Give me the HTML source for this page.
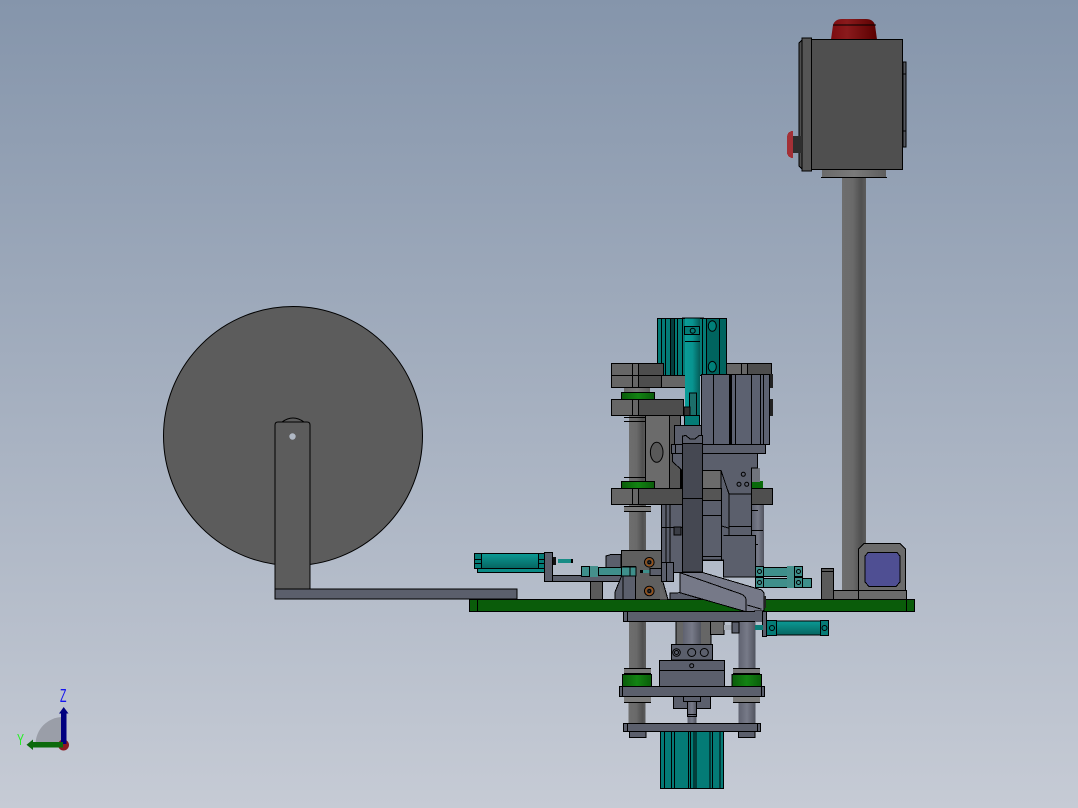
<!DOCTYPE html>
<html><head><meta charset="utf-8"><style>
html,body{margin:0;padding:0;width:1078px;height:808px;overflow:hidden}
svg{display:block}
rect,path,circle,ellipse,polygon{stroke:#000;stroke-width:1}
.n{stroke:none}
.l{fill:none;stroke:#000;stroke-width:1}
.b{fill:#5b5f6c}
.d{fill:#4d4d4d}
.g{fill:#666}
.t{fill:#047b76}
.gr{fill:#0a5c0a}
</style></head><body>
<svg width="1078" height="808" viewBox="0 0 1078 808" xmlns="http://www.w3.org/2000/svg" shape-rendering="crispEdges">
<defs>
<linearGradient id="bg" x1="0" y1="0" x2="0" y2="1"><stop offset="0" stop-color="#8595ab"/><stop offset="1" stop-color="#c6cbd5"/></linearGradient>
<linearGradient id="cy" x1="0" y1="0" x2="1" y2="0"><stop offset="0" stop-color="#6e6e6e"/><stop offset=".45" stop-color="#6a6a6a"/><stop offset=".8" stop-color="#505050"/><stop offset="1" stop-color="#5c5c5c"/></linearGradient>
<linearGradient id="cb" x1="0" y1="0" x2="1" y2="0"><stop offset="0" stop-color="#5f6270"/><stop offset=".5" stop-color="#777a88"/><stop offset="1" stop-color="#50535e"/></linearGradient>
<linearGradient id="tr" x1="0" y1="0" x2="1" y2="0"><stop offset="0" stop-color="#0a9c97"/><stop offset=".5" stop-color="#089490"/><stop offset="1" stop-color="#055c58"/></linearGradient>
<linearGradient id="th" x1="0" y1="0" x2="0" y2="1"><stop offset="0" stop-color="#0b9a95"/><stop offset="1" stop-color="#066560"/></linearGradient>
<linearGradient id="grn" x1="0" y1="0" x2="1" y2="0"><stop offset="0" stop-color="#0a5c0a"/><stop offset=".5" stop-color="#138313"/><stop offset="1" stop-color="#0a5c0a"/></linearGradient>
<linearGradient id="red" x1="0" y1="0" x2="1" y2="0"><stop offset="0" stop-color="#7d0c10"/><stop offset=".35" stop-color="#8a1a1c"/><stop offset="1" stop-color="#5a0000"/></linearGradient>
<linearGradient id="col" x1="0" y1="0" x2="1" y2="0"><stop offset="0" stop-color="#6a6a6a"/><stop offset=".5" stop-color="#7a7a7a"/><stop offset="1" stop-color="#5e5e5e"/></linearGradient>
</defs>
<rect class="n" x="0" y="0" width="1078" height="808" fill="url(#bg)"/>

<!-- spool -->
<g shape-rendering="auto">
<circle cx="293" cy="436" r="129.5" fill="#5c5c5c"/>
<path d="M282 422Q293 414 304 422" fill="#5c5c5c"/>
<path d="M275 590V425Q275 422 278 422H307Q310 422 310 425V590Z" fill="#5c5c5c"/>
<circle class="n" cx="292.500" cy="436.500" r="3.200" fill="#b0b8c4"/>
</g>
<rect class="b" x="275" y="589" width="242" height="10"/>

<!-- pole and box -->
<rect x="842" y="177" width="24" height="414" fill="url(#cy)" class="n"/>
<path class="n" fill="url(#red)" d="M831 39.500L833 25Q835 19 842 19H866Q873 19 875 25L877 39.500Z" shape-rendering="auto"/>
<path class="l" d="M833 25H876"/>
<path d="M802 40L799 43V166L802 169Z" class="d"/>
<rect x="802" y="38" width="9.500" height="133" fill="#555"/>
<rect x="811.500" y="39.500" width="91" height="130" fill="#4f4f4f"/>
<rect class="n" x="822" y="170" width="64" height="7" fill="url(#col)"/>
<path class="l" d="M821 177.500H887"/>
<rect x="903" y="62" width="3" height="85" fill="#55585f"/>
<path class="l" d="M903 74H906M903 131H906"/>
<path class="n" fill="#a33036" d="M787 136Q788 131 793 131V158Q788 158 787 153Z"/>
<rect class="n" x="793" y="136" width="9" height="17" fill="#2e2e2e"/>

<!-- right box on plate -->
<rect x="821.500" y="568.500" width="12" height="31" fill="#5a5a5a"/>
<path class="l" d="M821 571.500H834"/>
<rect x="834" y="591" width="25" height="8" fill="#6b6b6b" class="n"/>
<path class="l" d="M834 590.500H859"/>
<path fill="#6b6b6b" d="M858.500 590.500V549L864 543.500H900L905.500 549V590.500Z"/>
<path fill="#4f4f93" d="M865 556L868 552.500H897L900 556V582L896 586.500H869L865 582Z"/>
<rect x="858.500" y="590.500" width="48" height="9" fill="#6b6b6b"/>

<!-- upper teal -->
<rect class="t" x="657.500" y="318.500" width="69" height="57"/>
<rect class="n" x="707" y="319" width="19" height="56" fill="#00645f"/>
<rect class="n" x="671" y="319" width="3" height="56" fill="#04403e"/>
<path class="l" d="M661.500 319V375M665.500 319V375M670.500 319V375M674.500 319V375M677.500 319V375M682.500 319V375M702.500 319V375M706.500 319V375M719.500 319V375"/>
<g shape-rendering="auto"><ellipse cx="712.300" cy="326" rx="4" ry="5.300" fill="#00807a"/><ellipse cx="712.300" cy="366.700" rx="4" ry="5.300" fill="#00807a"/></g>

<!-- upper plates -->
<rect class="g" x="611.500" y="363.500" width="52" height="12"/>
<rect class="d" x="638.500" y="363.500" width="25" height="12"/>
<rect class="g" x="611.500" y="375.500" width="74" height="12"/>
<rect class="d" x="638.500" y="375.500" width="23" height="12"/>
<path class="l" d="M632.500 363V387M638.500 363V387"/>
<rect class="g" x="726.500" y="363.500" width="45" height="12"/>
<rect class="d" x="747.500" y="363.500" width="24" height="12"/>
<path class="l" d="M741.500 363V375M747.500 363V375"/>
<rect class="n" x="770" y="374" width="3" height="14" fill="#222"/>
<rect class="n" x="624" y="388" width="26" height="5" fill="url(#col)"/>
<rect x="621.500" y="392.500" width="33" height="7" fill="url(#grn)"/>
<rect class="g" x="611.500" y="399.500" width="72" height="16"/>
<rect class="d" x="638.500" y="399.500" width="45" height="16"/>
<path class="l" d="M632.500 399V415M638.500 399V415"/>
<rect class="n" x="770" y="399" width="3" height="17" fill="#222"/>

<!-- pillar + block upper-left -->
<rect class="n" x="629" y="416" width="17" height="66" fill="url(#cy)"/>
<path class="l" d="M624 417.500H651M624 421.500H651M624 477.500H651"/>
<rect x="645.500" y="415.500" width="35" height="73" fill="#6b6b6b"/>
<rect x="669.500" y="415.500" width="11" height="73" fill="#555"/>
<g shape-rendering="auto"><ellipse cx="656.700" cy="452.300" rx="6.300" ry="10" fill="#595959"/></g>
<rect x="621.500" y="481.500" width="33" height="7" fill="url(#grn)"/>
<rect class="n" x="752" y="481" width="11" height="7" fill="#0a6a0a"/>

<!-- behind right column -->
<rect class="n" x="752" y="505" width="12" height="62" fill="url(#cb)"/>
<rect class="n" x="752" y="468" width="8" height="14" fill="#70747c"/>
<path class="l" d="M752 510.500H758M752 530.500H763M752 544.500H758"/>

<!-- rail plates -->
<rect class="n" x="629" y="505" width="17" height="46" fill="url(#cy)"/>
<rect class="n" x="624" y="506" width="27" height="6" fill="#7a7a7a"/>
<path class="l" d="M624 506.500H651M624 511.500H651"/>
<rect x="661.500" y="504.500" width="21" height="68" class="b"/>
<path class="l" d="M662 527.500H682M666 505V572M670 505V562"/>
<rect x="674" y="527" width="7" height="8" fill="#3a3d45"/>

<!-- center right mass -->
<path class="b" d="M672.500 453.500V461.500L681.500 470V488.500H702.500V560H723.500V577H755.500V535.500H751.500V468H757.500V453.500Z"/>
<rect x="702.500" y="470.500" width="18.500" height="18" fill="#6b6b6b"/>
<path class="l" d="M721 470.500L729 494V535.500M729 494H751.500M721.500 488V526L728.500 528M729 526.500H751.500M723.500 535.500H755.500"/>
<g shape-rendering="auto" fill="#5b5f6c"><circle cx="743.300" cy="474.300" r="2"/><circle cx="739" cy="484.300" r="2"/><circle cx="746.700" cy="484.300" r="2"/></g>
<rect x="702.500" y="500" width="19" height="60" class="b"/>
<path class="l" d="M703 515.500H721M703 556.500H721M703 560.500H723"/>
<rect x="702.500" y="488.500" width="19" height="12" fill="#555"/>
<rect x="751.500" y="488.500" width="21" height="16" fill="#4f4f4f"/>
<rect x="611.500" y="488.500" width="71" height="16" fill="#4f4f4f"/>
<rect class="g" x="611.500" y="488.500" width="27" height="16"/>
<path class="l" d="M632.500 488V504M638.500 488V504"/>

<!-- teal rod -->
<rect x="685" y="318" width="15" height="107" fill="url(#tr)" class="n"/>
<path class="l" d="M682 318H704M685 341.500H700"/>
<rect x="684.500" y="326.500" width="15" height="8" class="t"/>
<g shape-rendering="auto"><circle cx="692.700" cy="330.700" r="2.500" fill="none"/></g>
<rect x="689.500" y="393" width="7" height="23" fill="#1c6e6a"/>
<rect x="684" y="407" width="6" height="9" fill="#333"/>
<rect x="684.500" y="415.500" width="15" height="11" class="t"/>

<!-- motor block -->
<rect x="701.500" y="374.500" width="68" height="70" fill="#5c6170"/>
<path class="l" d="M713.500 375V444M735.500 375V444M751.500 375V444M760.500 375V444M763.500 375V444"/>
<rect class="n" x="729" y="375" width="3" height="69" fill="#000"/>
<path class="b" d="M674.500 444.500V425.500H701.500V444.500Z"/>
<rect class="b" x="671.500" y="444.500" width="94" height="9"/>
<path class="l" d="M675.500 445V453"/>
<rect x="682.500" y="443" width="20" height="129" fill="#454852"/>
<path class="l" d="M682.500 498.500H702.500"/>
<path class="b" d="M682.500 443.500V436L686 435.500L690 439H695L699 435.500H702.500V443.500Z"/>

<!-- left cylinder -->
<rect x="477.500" y="567.500" width="67" height="5" fill="#0a8a85"/>
<rect x="474.500" y="553.500" width="70" height="15" fill="url(#th)"/>
<rect x="474.500" y="553.500" width="7" height="15" class="t"/>
<rect x="538.500" y="553.500" width="6" height="15" class="t"/>
<path class="l" d="M475 559.500H481M475 563.500H481M539 559.500H544M539 563.500H544M499 553.500H522"/>
<rect x="544.500" y="552.500" width="8" height="29" class="b"/>
<rect class="n" x="553" y="557" width="3" height="8" fill="#111"/>
<rect x="558" y="559" width="14" height="4" fill="#178c86" class="n"/>
<rect class="n" x="571" y="559" width="2" height="4" fill="#000"/>
<rect x="552.500" y="575.500" width="70" height="6" class="b"/>
<rect x="590.500" y="581.500" width="12" height="18" fill="#5a5a5a"/>

<!-- central left block -->
<path fill="#5b5f6c" d="M606 568V556L611 554.500H621V568Z"/>
<path fill="#5b5f6c" d="M615 599.500V592L622 575H632V599.500Z"/>
<path fill="#5f5f5f" d="M621.500 550.500H661.500V577L668 599.500H635V567H621.500Z"/>
<rect x="623" y="566.500" width="12.500" height="33" class="b"/>
<g shape-rendering="auto">
<circle cx="649.300" cy="562.300" r="4.800" fill="#4d4d4d" stroke="#000"/><circle cx="649.300" cy="562.300" r="3.500" fill="none" style="stroke:#96521a;stroke-width:1.500"/><circle cx="649.300" cy="562.300" r="1.500" fill="#333"/>
<circle cx="649.300" cy="591" r="4.800" fill="#4d4d4d" stroke="#000"/><circle cx="649.300" cy="591" r="3.500" fill="none" style="stroke:#96521a;stroke-width:1.500"/><circle cx="649.300" cy="591" r="1.500" fill="#333"/>
</g>

<!-- small cylinder left -->
<rect x="581.500" y="566.500" width="8" height="10" fill="#3e8f8b"/>
<rect class="n" x="590" y="566" width="8" height="11" fill="#45908c"/>
<rect x="598.500" y="567.500" width="25" height="8" fill="#3f8f8b"/>
<rect x="621.500" y="567" width="9" height="9" fill="#3e8f8b"/>
<rect x="630" y="567" width="6" height="9" fill="#3e8f8b"/>
<rect class="n" x="640" y="570" width="3" height="3" fill="#000"/>
<rect class="n" x="643" y="570" width="7" height="3" fill="#3e8f8b"/>
<rect x="650" y="568.500" width="12" height="7" fill="#5b5f6c"/>
<rect x="661.500" y="562.500" width="12" height="19" fill="#5b5f6c"/>
<path class="l" d="M666.500 563V581"/>

<!-- right cylinders -->
<rect x="755.500" y="566.500" width="8" height="10" fill="#3e8f8b"/>
<rect x="763.500" y="567.500" width="24" height="9" fill="#3f8f8b"/>
<rect class="n" x="787" y="566" width="7" height="11" fill="#45908c"/>
<rect x="794.500" y="566.500" width="8" height="10" fill="#3e8f8b"/>
<rect x="755.500" y="577.500" width="8" height="10" fill="#3e8f8b"/>
<rect x="763.500" y="578.500" width="24" height="9" fill="#3f8f8b"/>
<rect class="n" x="787" y="577" width="7" height="11" fill="#45908c"/>
<rect x="794.500" y="577.500" width="8" height="10" fill="#3e8f8b"/>
<rect x="802.500" y="578.500" width="9" height="9" fill="#3e8f8b"/>
<g shape-rendering="auto" fill="none"><circle cx="759.500" cy="571.500" r="2"/><circle cx="798.500" cy="571.500" r="2"/><circle cx="759.500" cy="582.500" r="2"/><circle cx="798.500" cy="582.500" r="2"/></g>

<!-- green plate -->
<rect class="gr" x="469.500" y="599.500" width="445" height="12"/>
<path class="l" d="M477.500 600V611M906.500 600V611"/>

<!-- chute -->
<path class="n" fill="#666" d="M660 585L667 599.500H660Z"/>
<path fill="#5b5f6c" d="M670 593L680 592.700L702.700 599.500H670Z"/>
<path fill="#767988" d="M680 572.700H703.300L761.700 590L764 593V610.700L746 611.700L680 592.700Z"/>
<path class="l" d="M680 572.700L741 594Q746 596 746 600V611.700M703.300 572.700L761.700 590M747.300 605L761.700 609.300"/>
<rect class="n" x="764" y="596" width="2" height="12" fill="#222"/>

<!-- below plate -->
<rect class="n" x="629" y="622" width="17" height="46" fill="url(#cy)"/>
<rect class="n" x="738.500" y="622" width="17" height="46" fill="url(#cb)"/>
<rect x="676" y="621.500" width="35" height="23" fill="#666"/>
<rect class="n" x="683" y="622" width="18" height="22" fill="url(#cb)"/>
<rect x="710.500" y="621.500" width="13.500" height="13" fill="#6a6a6a"/>
<rect class="n" x="724" y="625" width="8" height="5" fill="#a8aeb8"/>
<rect x="732" y="622" width="7" height="11" fill="#5b5f6c"/>
<rect x="623.500" y="611.500" width="135" height="10" class="b"/>
<path class="l" d="M627.500 612V621"/>
<rect x="762.500" y="611.500" width="4" height="25" fill="#5b5f6c"/>
<rect class="n" x="755" y="611" width="7" height="11" fill="#5b5f6c"/>

<!-- bottom cylinder -->
<rect class="n" x="755" y="625" width="8" height="5" fill="#0a7d78"/>
<rect x="776.500" y="621" width="44" height="14" fill="url(#th)"/>
<rect x="766.500" y="620.500" width="10" height="15" class="t"/>
<rect x="820.500" y="620.500" width="8" height="15" class="t"/>
<g shape-rendering="auto"><circle cx="772" cy="628" r="2.500" fill="none"/><circle cx="824.500" cy="628" r="2.500" fill="none"/></g>

<!-- lower assembly -->
<rect class="n" x="628.700" y="702" width="17" height="22" fill="url(#cy)"/>
<rect class="n" x="738.500" y="702" width="17" height="22" fill="url(#cb)"/>
<rect class="n" x="624" y="668.500" width="27" height="6" fill="#777"/>
<path class="l" d="M624 668.500H651M624 673.500H651"/>
<rect class="n" x="733" y="668.500" width="27" height="6" fill="#777"/>
<path class="l" d="M733 668.500H760M733 673.500H760"/>
<rect x="622.500" y="674.500" width="29" height="12" fill="url(#grn)"/>
<rect x="732" y="674.500" width="29.500" height="12" fill="url(#grn)"/>
<rect x="671.500" y="644.500" width="41" height="15.500" class="b"/>
<g shape-rendering="auto">
<circle cx="676.500" cy="652.500" r="3.800" fill="none"/><circle cx="676.500" cy="652.500" r="2" fill="none"/>
<circle cx="691.700" cy="652.500" r="4" fill="none"/><circle cx="704.300" cy="652.500" r="4" fill="none"/>
</g>
<rect x="659.500" y="660.500" width="65" height="26" class="b"/>
<path class="l" d="M660 670.500H724"/>
<g shape-rendering="auto"><circle cx="691.700" cy="665.700" r="2" fill="none"/></g>
<rect class="b" x="619.500" y="686.500" width="145" height="10"/>
<path class="l" d="M622.500 687V696M761.500 687V696"/>
<rect class="n" x="624" y="697" width="27" height="6" fill="#7d7d7d"/>
<path class="l" d="M624 696.500H651M624 702.500H651"/>
<rect class="n" x="733" y="697" width="27" height="6" fill="#7d7d7d"/>
<path class="l" d="M733 696.500H760M733 702.500H760"/>
<rect x="673.500" y="696.500" width="37" height="12" class="b"/>
<rect x="683.500" y="696.500" width="17" height="5" class="b"/>
<rect class="n" x="687.500" y="702" width="9" height="21" fill="url(#cb)"/>
<path class="l" d="M687.500 702V716M696.500 702V716M687 714.500H697M687 716.500H697"/>
<rect class="b" x="623.500" y="723.500" width="137" height="8"/>
<path class="l" d="M627.500 724V731M757.500 724V731"/>
<rect class="b" x="629.500" y="731.500" width="16.500" height="6"/>
<rect class="b" x="738.500" y="731.500" width="16.500" height="6"/>
<rect class="t" x="660.500" y="731.500" width="63" height="57"/>
<path class="l" d="M664.500 732V788M671.500 732V788M674.500 732V788M688.500 732V788M690.500 732V788M694 732V788M696 732V788M710 732V788M712.500 732V788M720 732V788"/>

<!-- triad -->
<g shape-rendering="auto">
<path class="n" d="M35.500 744.500A27.500 27.500 0 0 1 63 717V744.500Z" fill="#9a9ea8"/>
<circle class="n" cx="63.500" cy="745" r="5.500" fill="#8c1a20"/>
<rect class="n" x="61" y="713" width="5.500" height="31" fill="#000080"/>
<path class="n" d="M59 713.500L63.700 707L68.500 713.500Z" fill="#000080"/>
<rect class="n" x="33" y="742" width="30" height="5.500" fill="#0c6a0c"/>
<path class="n" d="M33 739.500L26.500 744.700L33 750Z" fill="#0c6a0c"/>
<text x="60" y="702" font-family="Liberation Sans, sans-serif" font-size="18" fill="#1414f0" stroke="none" textLength="6.500" lengthAdjust="spacingAndGlyphs">Z</text>
<text x="17" y="745" font-family="Liberation Sans, sans-serif" font-size="16" fill="#22f022" stroke="none" textLength="7" lengthAdjust="spacingAndGlyphs">Y</text>
</g>
</svg>
</body></html>
